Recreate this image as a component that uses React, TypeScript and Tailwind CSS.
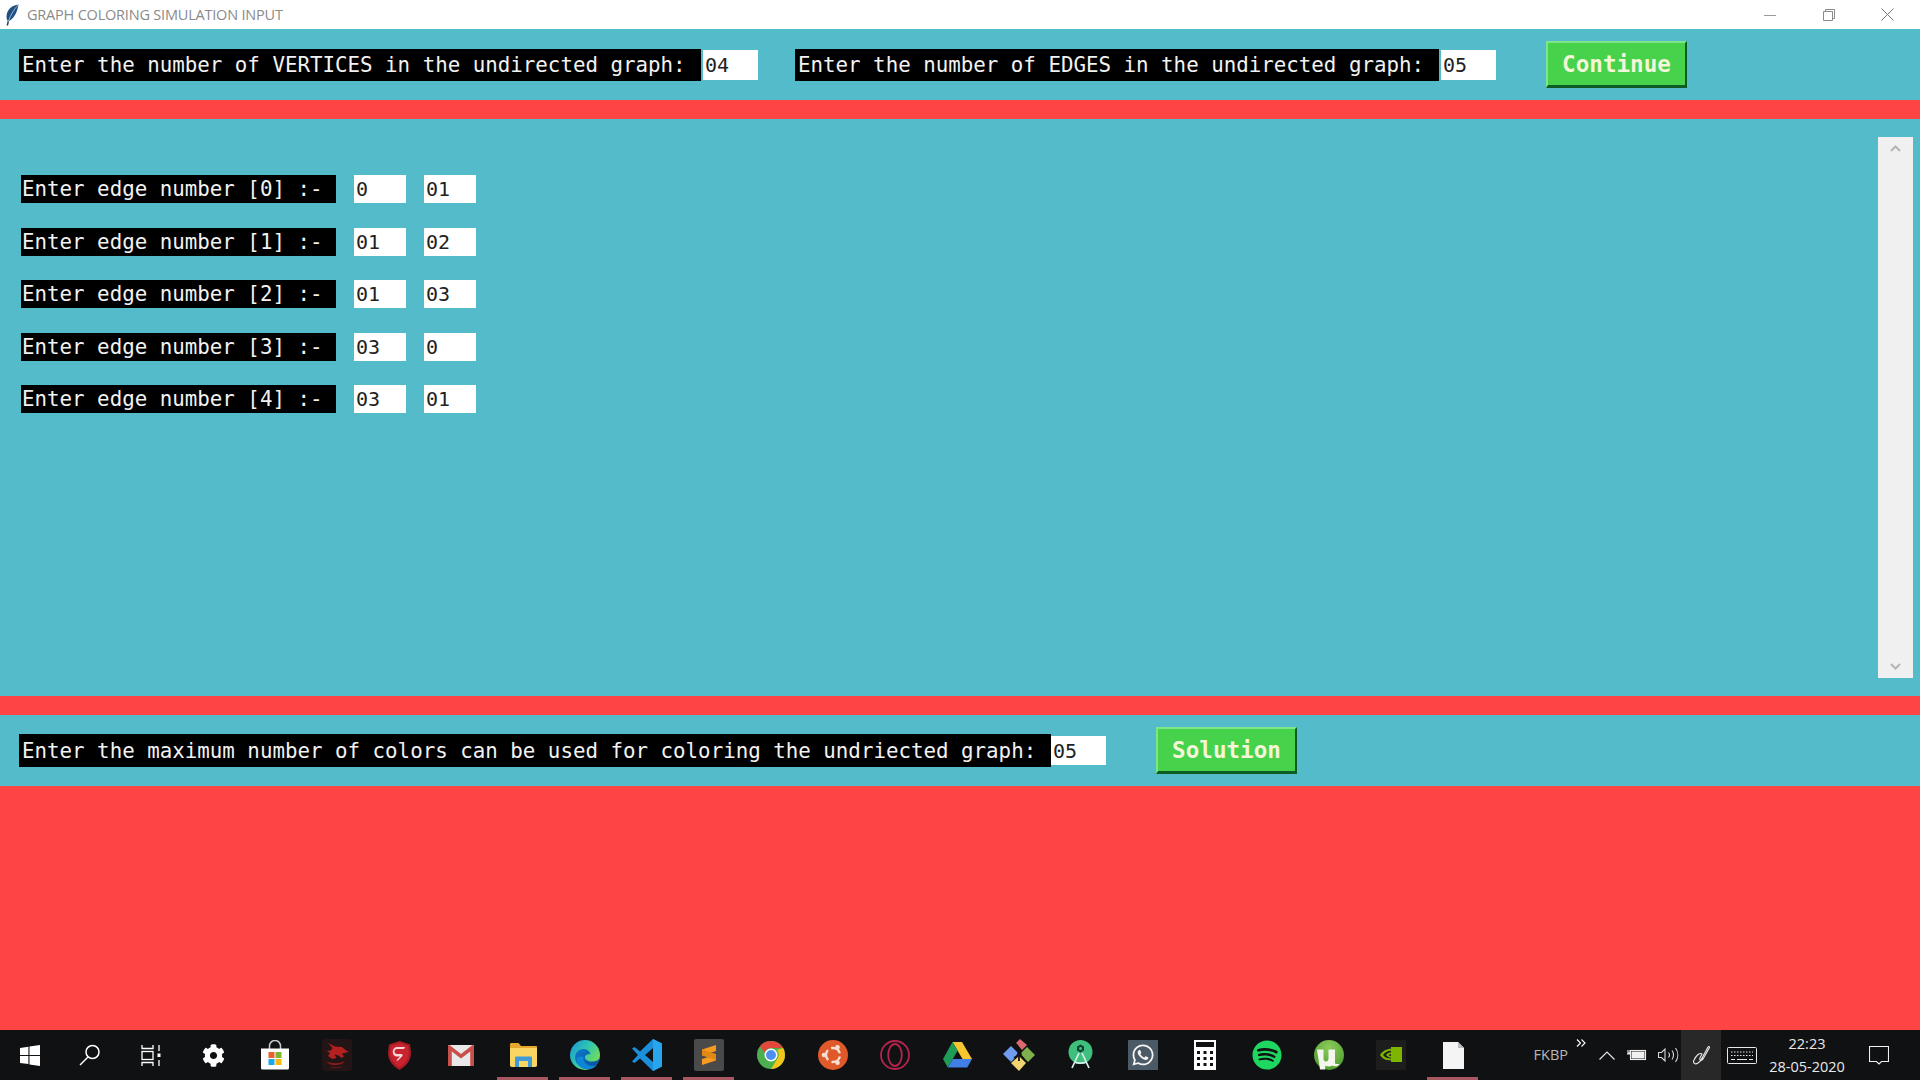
import React from 'react';
import { FaCog, FaSpotify, FaWhatsapp } from 'react-icons/fa';

const mono = "font-['DejaVu_Sans_Mono','Liberation_Mono',monospace]";

const edges = [
  ['0', '01'],
  ['01', '02'],
  ['01', '03'],
  ['03', '0'],
  ['03', '01'],
];

const Feather = () => (
  <svg width="14" height="22" viewBox="0 0 14 22">
    <path d="M13.500 .500C7 1 1.500 6 1.500 12.500c0 2 .500 3.500 1.500 5C8.500 15.500 12.500 8 13.500 .500z" fill="#1f4f80" />
    <path d="M13 1C9.500 5 6 10 3.300 17.600" stroke="#a9c6dc" strokeWidth="0.900" fill="none" />
    <path d="M3.300 17.300L2.300 21.500" stroke="#2c3e50" strokeWidth="1.500" />
  </svg>
);

const Label = ({ text, className }: { text: string; className: string }) => (
  <div className={`flex items-center bg-black text-[#f2f2f2] text-[20.800px] whitespace-pre pt-[2px] ${mono} ${className}`}>{text}</div>
);

const Field = ({ value, className }: { value: string; className: string }) => (
  <input
    readOnly
    value={value}
    className={`bg-white text-[#222222] text-[20px] px-[2px] outline-none ${mono} ${className}`}
  />
);

const GreenButton = ({ text, className }: { text: string; className: string }) => (
  <button className={`h-[47px] bg-[#46d24a] border-2 border-t-[#7fe58a] border-l-[#7fe58a] border-r-[#0c5c24] border-b-[#0c5c24] border-b-[3px] text-[#f4f6d8] font-bold text-[22.600px] pt-[2px] ${mono} ${className}`}>
    {text}
  </button>
);

const WinLogo = () => (
  <svg width="20" height="21" viewBox="0 0 20 21" fill="#fff">
    <path d="M0 3l8.400-1.200v8.100H0zM9.500 1.600L20 0v9.900H9.500zM0 11h8.400v8.100L0 18zM9.500 11H20v10L9.500 19.400z" />
  </svg>
);

const SearchIcon = () => (
  <svg width="22" height="22" viewBox="0 0 22 22" fill="none" stroke="#fff" strokeWidth="1.500">
    <circle cx="13.500" cy="8" r="6.500" />
    <path d="M9 13L1 21" />
  </svg>
);

const TaskView = () => (
  <svg width="20" height="21" viewBox="0 0 20 21" fill="none" stroke="#fff" strokeWidth="1.300">
    <path d="M1 0v3.500h11V0M1 21v-3.500h11V21" />
    <rect x="1" y="6.500" width="11" height="8" />
    <path d="M18 0v6M18 15v6" />
    <rect x="16.500" y="8.500" width="3" height="3.500" fill="#fff" stroke="none" />
  </svg>
);

const Store = () => (
  <svg width="30" height="30" viewBox="0 0 30 30">
    <path d="M9.500 9V6a5.500 5.500 0 0 1 11 0v3" fill="none" stroke="#c9c9c9" strokeWidth="1.500" />
    <path d="M1 8.500h28V28a1.500 1.500 0 0 1-1.500 1.500h-25A1.500 1.500 0 0 1 1 28z" fill="#fff" />
    <rect x="8.500" y="12" width="6" height="6" fill="#e9622e" />
    <rect x="15.500" y="12" width="6" height="6" fill="#7db52e" />
    <rect x="8.500" y="19" width="6" height="6" fill="#1ea6e8" />
    <rect x="15.500" y="19" width="6" height="6" fill="#f7b90f" />
  </svg>
);

const Dragon = () => (
  <svg width="30" height="32" viewBox="0 0 30 32">
    <rect width="30" height="32" rx="3" fill="#231416" />
    <path d="M6 4l7 3.500 7 .500 4 3.500 3 1-4 1.500-3 .500 2 3-2.500 1.500-3-2.500-4-1 2 3.500-4 1L6 17l2-3-3.500-2L9 11.500 10.500 9z" fill="#b3201f" />
    <path d="M4 22c5 3 13 3 19 0-3 5-15 6-19 0zM7 27c4 2.200 10 2 14 0-3 3-11 3-14 0z" fill="#8e1a1a" />
  </svg>
);

const Shield = () => (
  <svg width="23" height="29" viewBox="0 0 23 29">
    <path d="M11.500 0L22 3.500 23 12c0 8-5.500 13.500-11.500 17C5.500 25.500 0 20 0 12l1-8.500z" fill="#a91c26" />
    <path d="M11.500 2l8.500 3 .800 7c0 6.500-4.300 11-9.300 14.300C6.500 23 2.200 18.500 2.200 12L3 5z" fill="#c8242f" />
    <path d="M16 8H9c-1.500 0-2.500 1-2.500 2.500S7.500 13 9 13h4.500c1.200 0 1.700 1.500.5 2.500L9.500 20l-1-1 3.500-3.500H9C6 15.500 4.800 13 4.800 11c0-3 2-5 4.700-5H17z" fill="#f3d9db" />
  </svg>
);

const Gmail = () => (
  <svg width="26" height="21" viewBox="0 0 26 21">
    <rect width="26" height="21" rx="1" fill="#e9e9e9" />
    <path d="M0 1.500C0 .500.500 0 1.500 0l11.500 9L24.500 0c1 0 1.500.500 1.500 1.500V21h-3.800V6.500L13 13.500 3.800 6.500V21H0z" fill="#c8504a" />
  </svg>
);

const Folder = () => (
  <svg width="27" height="24" viewBox="0 0 27 24">
    <path d="M0 1.500C0 .500.500 0 1.500 0h7L11 3h15c.600 0 1 .400 1 1v4H0z" fill="#e5a82d" />
    <path d="M0 5h27v17c0 1-.500 2-2 2H2c-1.500 0-2-1-2-2z" fill="#fbd561" />
    <path d="M5 24v-9c0-1 .500-1.500 1.500-1.500h14c1 0 1.500.500 1.500 1.500v9h-4v-6H9v6z" fill="#3f9bd5" />
  </svg>
);

const Edge = () => (
  <svg width="30" height="30" viewBox="0 0 30 30">
    <defs>
      <linearGradient id="edgeTop" x1="0" y1="0" x2="1" y2="0.700">
        <stop offset="0" stopColor="#1b8fdc" />
        <stop offset="0.500" stopColor="#2fc6b0" />
        <stop offset="1" stopColor="#7fe04a" />
      </linearGradient>
      <linearGradient id="edgeLow" x1="0" y1="0" x2="1" y2="1">
        <stop offset="0" stopColor="#0c79c9" />
        <stop offset="1" stopColor="#0a4f9f" />
      </linearGradient>
    </defs>
    <circle cx="15" cy="15" r="15" fill="url(#edgeTop)" />
    <path d="M30 17c-1 3-4 4.500-8 4.500-5 0-7.500-2.500-7-5 .300-1.500 3-2.800 5.500-2.500C19 9.500 14.500 8 10.500 9.500 5 11.500 3.500 18 7 23.500c3 4.500 9 6 14 5 4.500-1 8-5.500 9-11.500z" fill="url(#edgeLow)" />
    <path d="M13.500 17c-1 4 2 8 8 9 2 .300 4-.200 5.500-1-3 3.500-7.500 5-12 4-5-1-9-5.500-8.500-10.500 1-1.500 4-2.500 7-1.500z" fill="#0d86d6" />
  </svg>
);

const VsCode = () => (
  <svg width="30" height="32" viewBox="0 0 30 32">
    <path d="M21 0l9 4.500v23L21 32 8 19.500 2.500 24 0 22.500 6 16 0 9.500 2.500 8 8 12.500z" fill="#1b8fdc" />
    <path d="M21 9l-8 7 8 7z" fill="#101113" />
    <path d="M21 0l9 4.500v23L21 32z" fill="#27a5ee" />
  </svg>
);

const Sublime = () => (
  <svg width="30" height="32" viewBox="0 0 30 32">
    <rect width="30" height="32" rx="2" fill="#4a4a4a" />
    <path d="M22 6v6l-14 4.500v-6zM8 26v-6l14-4.500v6z" fill="#f79a1f" />
    <path d="M8 10.500l14 4.500v6L8 16.500z" fill="#e08a14" />
  </svg>
);

const Chrome = () => (
  <svg width="28" height="30" viewBox="0 0 28 28">
    <circle cx="14" cy="14" r="14" fill="#4caf50" />
    <path d="M14 0a14 14 0 0 1 12.100 7H14a7 7 0 0 0-6.500 4.500L2.900 5.500A14 14 0 0 1 14 0z" fill="#e0483b" />
    <path d="M26.100 7A14 14 0 0 1 14 28l5.800-9.500A7 7 0 0 0 20 9z" fill="#f5c518" />
    <circle cx="14" cy="14" r="6.500" fill="#fff" />
    <circle cx="14" cy="14" r="5" fill="#4d8ff0" />
  </svg>
);

const Ubuntu = () => (
  <svg width="30" height="30" viewBox="0 0 30 30">
    <circle cx="15" cy="15" r="15" fill="#e0592a" />
    <circle cx="15" cy="15" r="7" fill="none" stroke="#f6e0d4" strokeWidth="2.400" strokeDasharray="11 3.700" strokeDashoffset="-1.500" />
    <circle cx="6" cy="15" r="2.300" fill="#f6e0d4" />
    <circle cx="19.500" cy="7.200" r="2.300" fill="#f6e0d4" />
    <circle cx="19.500" cy="22.800" r="2.300" fill="#f6e0d4" />
  </svg>
);

const Opera = () => (
  <svg width="30" height="30" viewBox="0 0 30 30" fill="none" stroke="#b4254d" strokeWidth="1.800">
    <circle cx="15" cy="15" r="14" />
    <ellipse cx="15" cy="15" rx="6.800" ry="11" />
  </svg>
);

const Drive = () => (
  <svg width="29" height="26" viewBox="0 0 29 26">
    <path d="M9.500 0h9.500l10 17h-9.500z" fill="#f6c530" />
    <path d="M9.500 0L0 17l4.800 8.500 10-17z" fill="#1f9d57" />
    <path d="M4.800 25.500h19.400L29 17H9.800z" fill="#3f7fe6" />
  </svg>
);

const GitDiamonds = () => (
  <svg width="32" height="32" viewBox="0 0 32 32">
    <path d="M13 4l4-4 7 6-5 5z" fill="#d96b70" />
    <path d="M0 15l8-8 8 8-8 8z" fill="#6f9cf0" />
    <path d="M17 15l7-7 8 8-7 7z" fill="#7fb04c" />
    <path d="M8 24l8-7 7 7-7 8z" fill="#f2d471" />
    <path d="M13 5l4 6 1 6 3 3M17 11l-3 6-3 2M16 17v5" stroke="#111" strokeWidth="1.800" fill="none" />
  </svg>
);

const AndroidStudio = () => (
  <svg width="26" height="30" viewBox="0 0 26 30">
    <circle cx="12.500" cy="12" r="12" fill="#3fbf7c" />
    <path d="M12.500 4.500l3.500 2v4l-3.500 2-3.500-2v-4z" fill="#123f36" />
    <circle cx="12.500" cy="8.500" r="1.500" fill="#3fbf7c" />
    <path d="M11 13L4 28M14 13l7 15M6 22c4 1.500 9 1.500 13 0" stroke="#d7eef0" strokeWidth="1.700" fill="none" />
  </svg>
);

const WhatsApp = () => (
  <div className="w-[30px] h-[30px] bg-[#4a5a66] flex items-center justify-center">
    <FaWhatsapp className="text-[#f5f5f5] w-[24px] h-[24px]" />
  </div>
);

const Calculator = () => (
  <svg width="22" height="30" viewBox="0 0 22 30">
    <rect width="22" height="30" fill="#fff" />
    <rect x="2" y="2" width="18" height="5" fill="#111" />
    <path d="M3 11h3v3H3zM9.500 11h3v3h-3zM16 11h3v3h-3zM3 17h3v3H3zM9.500 17h3v3h-3zM16 17h3v3h-3zM3 23h3v3H3zM9.500 23h3v3h-3zM16 23h3v3h-3z" fill="#111" />
  </svg>
);

const Spotify = () => (
  <div className="w-[30px] h-[30px] rounded-full bg-[#111111] flex items-center justify-center">
    <FaSpotify className="text-[#1ed760] w-[30px] h-[30px]" />
  </div>
);

const UTorrent = () => (
  <svg width="30" height="30" viewBox="0 0 30 30">
    <defs>
      <radialGradient id="utBall" cx="0.500" cy="0.250" r="0.800">
        <stop offset="0" stopColor="#8ccb5a" />
        <stop offset="1" stopColor="#4a9a2c" />
      </radialGradient>
    </defs>
    <circle cx="15" cy="15" r="15" fill="url(#utBall)" />
    <path d="M3 9.500h6.500v9c0 2 1 3 2.500 3s2.500-1 2.500-3v-9H21v13c0 1 .500 1.500 1.500 1.500h3c-1.500 2.500-5 3-7 1.500-1.500 1-5 1.500-7 0l-.500 4H6z" fill="#f4f6ee" />
  </svg>
);

const Nvidia = () => (
  <svg width="30" height="30" viewBox="0 0 30 30">
    <rect width="30" height="30" fill="#1d1d1d" />
    <rect x="15" y="7" width="11" height="15" fill="#7db500" />
    <path d="M4 15c3-5 9-7 13-6v2c-4-1-8 1-10 4 3 4 8 4 10 3v2c-4 1-10 0-13-5z" fill="#7db500" />
    <path d="M10 15c1.500-2 4-3 7-2.500v1.500c-2-.300-3.500.300-4.500 1 1 1 2.500 1.500 4.500 1v1.500c-3 .500-5.500-.500-7-2.500z" fill="#7db500" />
  </svg>
);

const FileIcon = () => (
  <svg width="21" height="27" viewBox="0 0 21 27">
    <path d="M0 0h15l6 6v21H0z" fill="#f4f4f4" />
    <path d="M15 0l6 6h-6z" fill="#bdbdbd" />
  </svg>
);

const apps: { icon: React.ReactNode; slot: string; underline?: boolean }[] = [
  { icon: <WinLogo />, slot: 'w-[60px]' },
  { icon: <SearchIcon />, slot: 'w-[60px]' },
  { icon: <TaskView />, slot: 'w-[62px]' },
  { icon: <FaCog className="text-white w-[23px] h-[23px]" />, slot: 'w-[62px]' },
  { icon: <Store />, slot: 'w-[62px]' },
  { icon: <Dragon />, slot: 'w-[62px]' },
  { icon: <Shield />, slot: 'w-[62px]' },
  { icon: <Gmail />, slot: 'w-[62px]' },
  { icon: <Folder />, slot: 'w-[62px]', underline: true },
  { icon: <Edge />, slot: 'w-[62px]', underline: true },
  { icon: <VsCode />, slot: 'w-[62px]', underline: true },
  { icon: <Sublime />, slot: 'w-[62px]', underline: true },
  { icon: <Chrome />, slot: 'w-[62px]' },
  { icon: <Ubuntu />, slot: 'w-[62px]' },
  { icon: <Opera />, slot: 'w-[62px]' },
  { icon: <Drive />, slot: 'w-[62px]' },
  { icon: <GitDiamonds />, slot: 'w-[62px]' },
  { icon: <AndroidStudio />, slot: 'w-[62px]' },
  { icon: <WhatsApp />, slot: 'w-[62px]' },
  { icon: <Calculator />, slot: 'w-[62px]' },
  { icon: <Spotify />, slot: 'w-[62px]' },
  { icon: <UTorrent />, slot: 'w-[62px]' },
  { icon: <Nvidia />, slot: 'w-[62px]' },
  { icon: <FileIcon />, slot: 'w-[62px]', underline: true },
];

const Tray = () => (
  <div className="flex-1 flex items-center justify-end h-full text-[#e6e6e6] font-['Open_Sans',sans-serif]">
    <span className="text-[14.500px] text-[#b8b8b8] mr-[8px]">FKBP</span>
    <svg width="10" height="8" viewBox="0 0 10 8" fill="none" stroke="#fff" strokeWidth="1.100" className="mb-[25px] mr-[13px]">
      <path d="M1 .500L4.500 4 1 7.500M5.500 .500L9 4 5.500 7.500" />
    </svg>
    <svg width="16" height="9" viewBox="0 0 16 9" fill="none" stroke="#e6e6e6" strokeWidth="1.200" className="mr-[12px]">
      <path d="M.500 8.500L8 1l7.500 7.500" />
    </svg>
    <svg width="20" height="14" viewBox="0 0 20 14" fill="none" stroke="#f0f0f0" strokeWidth="1.100" className="mr-[11px]">
      <rect x="3.500" y="2.500" width="15" height="9" />
      <rect x="4.500" y="3.500" width="13" height="7" fill="#f0f0f0" stroke="none" />
      <path d="M0 6h3M1 2v3h2V2" />
    </svg>
    <svg width="21" height="16" viewBox="0 0 21 16" fill="none" stroke="#d8d8d8" strokeWidth="1.100" className="mr-[2px]">
      <path d="M.500 5.500h3L7 2v12l-3.500-3.500h-3z" />
      <path d="M10.500 5.500a4 4 0 0 1 0 5M14 3.500a8 8 0 0 1 0 9M17.500 1a12 12 0 0 1 0 14" />
    </svg>
    <div className="w-[40px] h-full bg-[#282828] flex items-center justify-center">
      <svg width="20" height="21" viewBox="0 0 20 21" fill="none" stroke="#e8e8e8" strokeWidth="1.100">
        <path d="M10 15L17 2c.500-1 1.500-.500 1.500.500L12 14c-1 1.800-4 2-3-1L11 9c-2.500-2-6 2-8 6-1.500 3 1 5 4 3 2-1.500 4-3.500 5-5" />
      </svg>
    </div>
    <svg width="30" height="17" viewBox="0 0 30 17" fill="none" stroke="#e8e8e8" className="ml-[6px] mr-[5px]">
      <rect x=".500" y=".500" width="29" height="16" rx="1" />
      <path d="M4 5h22M4 8.500h22" strokeDasharray="1.500 1.500" />
      <path d="M4 12.500h4M10 12.500h10M22 12.500h4" />
    </svg>
    <div className="w-[90px] flex flex-col items-center text-[14.500px] leading-[23px] text-[#e8e8e8]">
      <span>22:23</span>
      <span>28-05-2020</span>
    </div>
    <svg width="20" height="19" viewBox="0 0 20 19" fill="none" stroke="#f0f0f0" strokeWidth="1.100" className="ml-[17px] mr-[31px]">
      <path d="M.500 .500h19v15h-7L10 18l-2.500-2.500h-7z" />
    </svg>
  </div>
);

export default function App() {
  return (
    <div className="w-[1920px] h-[1080px] flex flex-col overflow-hidden bg-[#54bbca]">
      <div className="h-[29px] shrink-0 bg-white flex items-center pl-[5px]">
        <Feather />
        <span className="ml-[8px] text-[14.500px] text-[#8a8a8a] font-['Open_Sans',sans-serif] tracking-[-0.2px]">GRAPH COLORING SIMULATION INPUT</span>
        <div className="ml-auto flex items-center text-[#8f8f8f]">
          <svg width="12" height="12" viewBox="0 0 12 12" stroke="#9a9a9a" className="mr-[47px]"><path d="M0 6.500h12" /></svg>
          <svg width="12" height="12" viewBox="0 0 12 12" fill="none" stroke="#8a8a8a" className="mr-[46px]"><path d="M2.500 2.500V.500h9v9h-2M.500 2.500h9v9h-9z" /></svg>
          <svg width="13" height="13" viewBox="0 0 13 13" stroke="#777777" className="mr-[26px]"><path d="M.500 .500l12 12M12.500 .500l-12 12" /></svg>
        </div>
      </div>

      <div className="h-[71px] shrink-0 flex items-center pl-[19px]">
        <Label text="Enter the number of VERTICES in the undirected graph:" className="w-[682px] h-[32px] pl-[3px]" />
        <Field value="04" className="w-[55px] h-[30px] ml-[2px]" />
        <Label text="Enter the number of EDGES in the undirected graph:" className="w-[644px] h-[32px] ml-[37px] pl-[3px]" />
        <Field value="05" className="w-[55px] h-[30px] ml-[2px]" />
        <GreenButton text="Continue" className="w-[141px] ml-[50px]" />
      </div>

      <div className="h-[19px] shrink-0 bg-[#ff4444]" />

      <div className="h-[577px] shrink-0 flex justify-between pl-[21px] pr-[7px]">
        <div className="pt-[56px] flex flex-col gap-[24.500px]">
          {edges.map((pair, i) => (
            <div key={i} className="flex h-[28px]">
              <Label text={`Enter edge number [${i}] :-`} className="w-[315px] h-[28px] pl-[1px]" />
              <Field value={pair[0]} className="w-[52px] h-[28px] ml-[18px]" />
              <Field value={pair[1]} className="w-[52px] h-[28px] ml-[18px]" />
            </div>
          ))}
        </div>
        <div className="w-[35px] h-[541px] mt-[18px] bg-[#f0f0f0] flex flex-col items-center justify-between py-[8px]">
          <svg width="11" height="7" viewBox="0 0 11 7" fill="none" stroke="#b5b5b5" strokeWidth="2"><path d="M1 6l4.500-4.500L10 6" /></svg>
          <svg width="11" height="7" viewBox="0 0 11 7" fill="none" stroke="#b5b5b5" strokeWidth="2"><path d="M1 1l4.500 4.500L10 1" /></svg>
        </div>
      </div>

      <div className="h-[19px] shrink-0 bg-[#ff4444]" />

      <div className="h-[71px] shrink-0 flex items-center pl-[19px]">
        <Label text="Enter the maximum number of colors can be used for coloring the undriected graph:" className="w-[1032px] h-[33px] pl-[3px]" />
        <Field value="05" className="w-[55px] h-[29px]" />
        <GreenButton text="Solution" className="w-[141px] ml-[50px]" />
      </div>

      <div className="flex-1 bg-[#ff4444]" />

      <div className="h-[50px] shrink-0 bg-[#101113] flex items-center">
        {apps.map((app, i) => (
          <div key={i} className={`relative h-full flex items-center justify-center shrink-0 ${app.slot}`}>
            {app.icon}
            {app.underline && <div className="absolute bottom-0 left-[5px] right-[6px] h-[3px] bg-[#a8565f]" />}
          </div>
        ))}
        <Tray />
      </div>
    </div>
  );
}
